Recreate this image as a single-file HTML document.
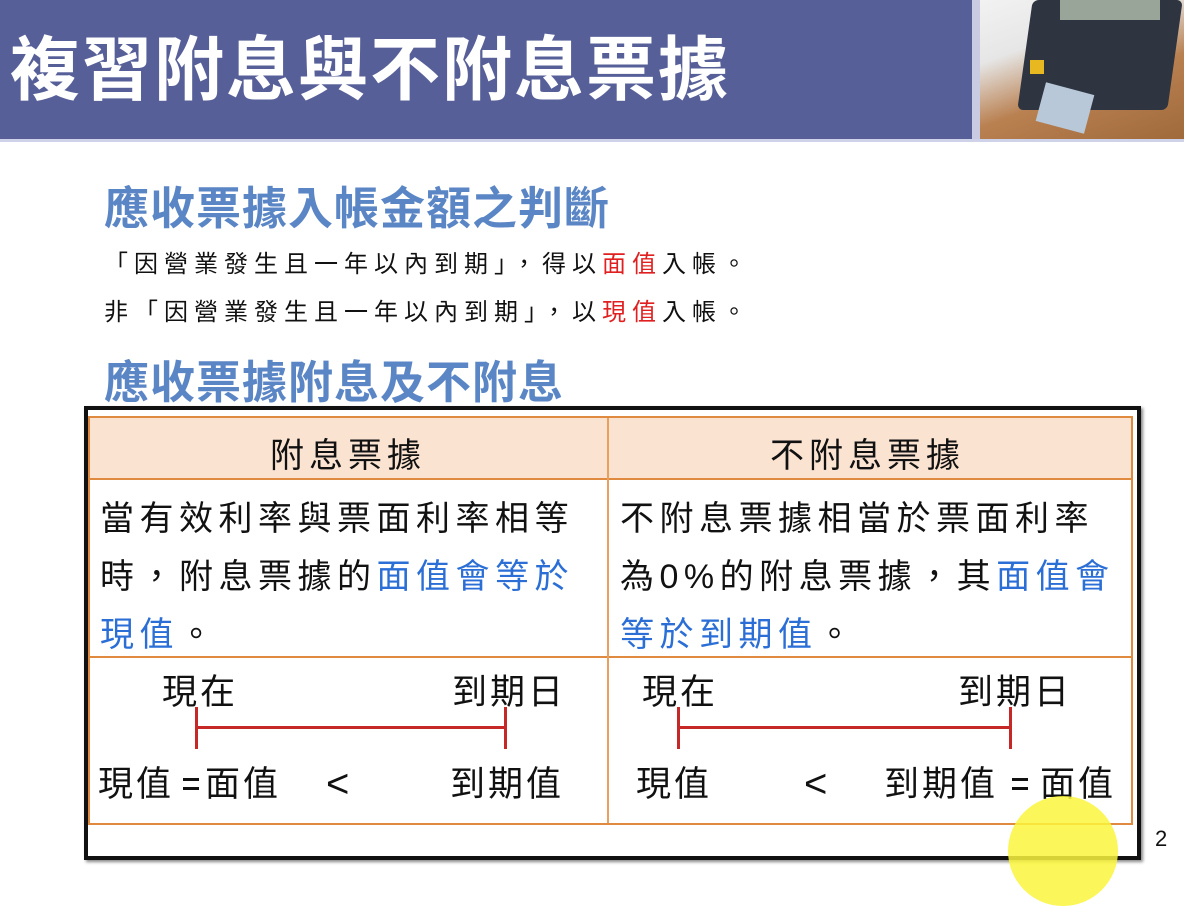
<!DOCTYPE html>
<html><head><meta charset="utf-8"><style>
*{margin:0;padding:0;box-sizing:border-box}
body{width:1184px;height:870px;background:#fff;position:relative;overflow:hidden;font-family:"Liberation Sans","Noto Sans CJK TC",sans-serif;color:#111}
.a{position:absolute;white-space:nowrap}
.b{color:#2a6ed6}.r{color:#e02020}
.h2{color:#5b86c5;font-size:45px;font-weight:bold;letter-spacing:1px}
.t{font-size:34px;letter-spacing:5.5px}
.l{font-size:35px;letter-spacing:3px}
.p{font-size:24px;letter-spacing:6px}
</style></head><body>
<div class="a" style="left:0;top:0;width:972px;height:139px;background:#565f98"></div>
<div class="a" style="left:972px;top:0;width:8px;height:139px;background:#c8cbe2"></div>
<div class="a" style="left:0;top:139px;width:1184px;height:3px;background:#cfd3ea"></div>
<div class="a" style="left:980px;top:0;width:204px;height:139px;background:linear-gradient(160deg,#f2f2f2 0%,#e6e6e6 30%,#b98050 60%,#a06a3a 100%)"></div>
<div class="a" style="left:1025px;top:0;width:150px;height:110px;background:#2e3440;transform:skewX(-8deg);border-radius:6px"></div>
<div class="a" style="left:1060px;top:0;width:100px;height:20px;background:#9aa59a"></div>
<div class="a" style="left:1030px;top:60px;width:14px;height:14px;background:#e8b820"></div>
<div class="a" style="left:1040px;top:88px;width:50px;height:40px;background:#b8c8d8;transform:rotate(15deg)"></div>
<div class="a" style="left:10px;top:14px;font-size:70px;font-weight:bold;color:#fff;letter-spacing:2px">複習附息與不附息票據</div>
<div class="a h2" style="left:104px;top:172px">應收票據入帳金額之判斷</div>
<div class="a p" style="left:104px;top:244px">「因營業發生且一年以內到期」，得以<span class="r">面值</span>入帳。</div>
<div class="a p" style="left:104px;top:292px">非「因營業發生且一年以內到期」，以<span class="r">現值</span>入帳。</div>
<div class="a h2" style="left:104px;top:346px">應收票據附息及不附息</div>
<div class="a" style="left:84px;top:406px;width:1057px;height:454px;border:4px solid #111;box-shadow:2px 2px 3px #888"></div>
<div class="a" style="left:88px;top:416px;width:1045px;height:409px;border:2px solid #e08a40"></div>
<div class="a" style="left:90px;top:418px;width:1041px;height:62px;background:#fbe3d2;border-bottom:2px solid #e08a40"></div>
<div class="a" style="left:90px;top:656px;width:1041px;height:2px;background:#e08a40"></div>
<div class="a" style="left:607px;top:418px;width:2px;height:405px;background:#e8a060"></div>
<div class="a" style="left:270px;top:428px;font-size:34px;letter-spacing:5px">附息票據</div>
<div class="a" style="left:770px;top:428px;font-size:34px;letter-spacing:5px">不附息票據</div>
<div class="a t" style="left:100px;top:490px;line-height:58px">當有效利率與票面利率相等<br>時，附息票據的<span class="b">面值會等於</span><br><span class="b">現值</span>。</div>
<div class="a t" style="left:620px;top:490px;line-height:58px">不附息票據相當於票面利率<br>為0%的附息票據，其<span class="b">面值會</span><br><span class="b">等於到期值</span>。</div>
<div class="a l" style="left:162px;top:664px">現在</div>
<div class="a l" style="left:452px;top:664px">到期日</div>
<div class="a" style="left:195px;top:707px;width:3px;height:42px;background:#c62828"></div>
<div class="a" style="left:504px;top:707px;width:3px;height:42px;background:#c62828"></div>
<div class="a" style="left:195px;top:726px;width:312px;height:3px;background:#c62828"></div>
<div class="a l" style="left:98px;top:756px">現值</div>
<div class="a" style="left:183px;top:778px;width:16px;height:3px;background:#111"></div>
<div class="a" style="left:183px;top:787px;width:16px;height:3px;background:#111"></div>
<div class="a l" style="left:205px;top:756px">面值</div>
<div class="a" style="left:326px;top:762px;font-size:40px">&lt;</div>
<div class="a l" style="left:450px;top:756px">到期值</div>
<div class="a l" style="left:642px;top:664px">現在</div>
<div class="a l" style="left:958px;top:664px">到期日</div>
<div class="a" style="left:677px;top:707px;width:3px;height:42px;background:#c62828"></div>
<div class="a" style="left:1009px;top:707px;width:3px;height:42px;background:#c62828"></div>
<div class="a" style="left:677px;top:726px;width:335px;height:3px;background:#c62828"></div>
<div class="a l" style="left:636px;top:756px">現值</div>
<div class="a" style="left:804px;top:762px;font-size:40px">&lt;</div>
<div class="a l" style="left:884px;top:756px">到期值</div>
<div class="a" style="left:1012px;top:778px;width:16px;height:3px;background:#111"></div>
<div class="a" style="left:1012px;top:787px;width:16px;height:3px;background:#111"></div>
<div class="a l" style="left:1040px;top:756px">面值</div>
<div class="a" style="left:1008px;top:796px;width:110px;height:110px;border-radius:50%;background:rgba(250,245,60,0.85)"></div>
<div class="a" style="left:1155px;top:826px;font-size:22px">2</div>
</body></html>
